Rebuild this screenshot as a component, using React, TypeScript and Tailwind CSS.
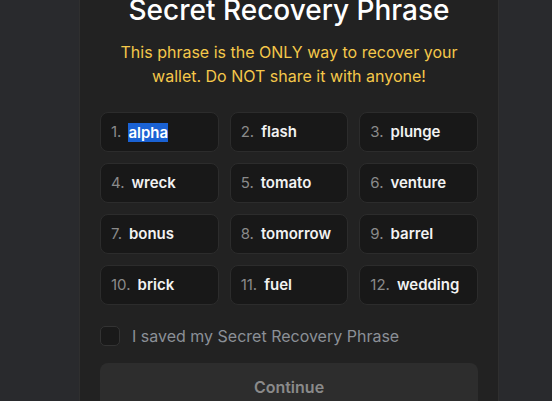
const words = [
  'alpha',
  'flash',
  'plunge',
  'wreck',
  'tomato',
  'venture',
  'bonus',
  'tomorrow',
  'barrel',
  'brick',
  'fuel',
  'wedding',
];

function WordTile({ index, word }: { index: number; word: string }) {
  return (
    <div className="flex h-10 items-center rounded-lg border border-[#2c2c2c] bg-[#181818] pl-2.5">
      <span className="mr-[7px] text-[15px] text-[#8a8a8a]">{index + 1}.</span>
      {index === 0 ? (
        <span className="bg-[#1a62d4] text-[15px] font-semibold leading-[19px] text-white">
          {word}
        </span>
      ) : (
        <span className="text-[15px] font-semibold text-[#f2f2f2]">{word}</span>
      )}
    </div>
  );
}

export default function App() {
  return (
    <div
      className="h-screen overflow-hidden bg-[#292a2d] pl-[79px]"
      style={{ fontFamily: 'Inter, "Noto Sans", sans-serif' }}
    >
      <div className="-mt-[28px] w-[420px] rounded-xl border border-[#2f2f2f] bg-[#222222] px-5 pt-5 pb-8">
        <h1 className="text-center text-[28px] font-medium leading-[34px] text-white">
          Secret Recovery Phrase
        </h1>
        <p className="mt-[13px] px-4 text-center text-base leading-6 text-[#f5c84a]">
          This phrase is the ONLY way to recover your wallet. Do NOT share it with anyone!
        </p>

        <div className="mt-[24px] grid grid-cols-3 gap-x-[11px] gap-y-[11px]">
          {words.map((w, i) => (
            <WordTile key={w} index={i} word={w} />
          ))}
        </div>

        <label className="mt-[19px] flex items-center gap-3">
          <span className="h-5 w-5 rounded-[5px] border border-[#333333] bg-[#1a1a1a]" />
          <span className="text-base text-[#8b9097]">I saved my Secret Recovery Phrase</span>
        </label>

        <button
          type="button"
          className="mt-[15px] h-12 w-full rounded-lg bg-[#2d2d2d] text-base font-semibold text-[#8a8a8a]"
        >
          Continue
        </button>
      </div>
    </div>
  );
}
